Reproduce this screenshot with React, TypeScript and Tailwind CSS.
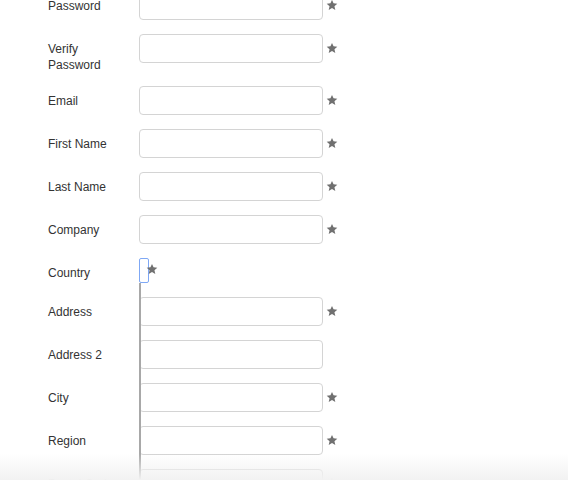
import React from 'react';

const Star: React.FC<{ className?: string }> = ({ className = '' }) => (
  <svg viewBox="0 0 24 24" className={`w-[12px] h-[12px] fill-[#707070] ${className}`}>
    <path d="M12 1.8l3.1 6.9 7.5.7-5.7 5 1.7 7.4L12 17.9l-6.6 3.9 1.7-7.4-5.7-5 7.5-.7z" />
  </svg>
);

type Row = { label: string[]; required: boolean };

const topRows: Row[] = [
  { label: ['Password'], required: true },
  { label: ['Verify', 'Password'], required: true },
  { label: ['Email'], required: true },
  { label: ['First Name'], required: true },
  { label: ['Last Name'], required: true },
  { label: ['Company'], required: true },
];

const bottomRows: Row[] = [
  { label: ['Address'], required: true },
  { label: ['Address 2'], required: false },
  { label: ['City'], required: true },
  { label: ['Region'], required: true },
  { label: ['Postal Code'], required: true },
];

const labelCls = 'w-[91px] shrink-0 pt-[7px] mb-[-1px] leading-[16px] text-[12px] text-[#333]';

const FieldRow: React.FC<{ row: Row }> = ({ row }) => (
  <div className="flex items-start">
    <label className={labelCls}>
      {row.label.map((l) => (
        <div key={l}>{l}</div>
      ))}
    </label>
    <div className="flex items-center gap-[3px]">
      <input className="w-[184px] h-[29px] border border-[#d4d4d4] rounded-[4px] bg-white outline-none" />
      {row.required && <Star className="mb-[1px]" />}
    </div>
  </div>
);

export default function App() {
  return (
    <div className="relative w-[568px] h-[480px] overflow-hidden bg-white font-['Liberation_Sans',Arial,sans-serif]">
      <div className="flex flex-col gap-[14px] pl-[48px] mt-[-9px]">
        {topRows.map((r) => (
          <FieldRow key={r.label.join(' ')} row={r} />
        ))}

        {/* Country: collapsed select, its dropdown edge runs down the column */}
        <div className="flex items-start h-[25px]">
          <label className={labelCls}>Country</label>
          <div className="flex items-start">
            <div className="w-[10px] h-[25px] border border-[#7fa8f5] rounded-[2px] bg-white" />
            <Star className="w-[11px] h-[11px] ml-[-3px] mt-[5px]" />
          </div>
        </div>

        <div className="flex flex-col gap-[14px] relative">
          {bottomRows.map((r) => (
            <FieldRow key={r.label.join(' ')} row={r} />
          ))}
          <div className="absolute left-[91px] top-[-14px] bottom-0 w-[2px] bg-[#a8a8a8]" />
        </div>
      </div>

      <div className="absolute left-0 right-0 bottom-0 h-[26px] bg-gradient-to-b from-white/0 to-[#f2f2f2]" />
    </div>
  );
}
